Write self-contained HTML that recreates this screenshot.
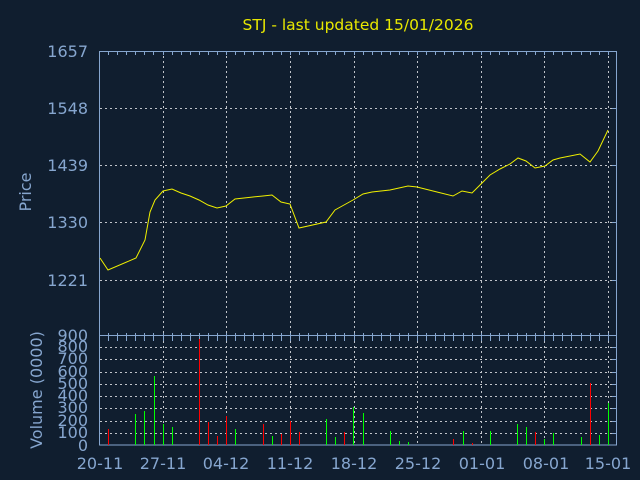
<!DOCTYPE html>
<html><head><meta charset="utf-8"><style>
html,body{margin:0;padding:0;background:#101e2f;}
svg{display:block}
text{font-family:"DejaVu Sans","Liberation Sans",sans-serif;}
</style></head><body>
<svg width="640" height="480" viewBox="0 0 640 480" xmlns="http://www.w3.org/2000/svg">
<rect width="640" height="480" fill="#101e2f"/>
<text x="358" y="30" font-size="15.5" fill="#e8e800" text-anchor="middle">STJ - last updated 15/01/2026</text>
<g stroke="#c0c4ca" stroke-width="1" stroke-dasharray="2,3" fill="none">
<path d="M100 108.5H617M100 165.5H617M100 222.5H617M100 280.5H617"/>
<path d="M100 433.5H617M100 421.5H617M100 408.5H617M100 396.5H617M100 384.5H617M100 372.5H617M100 359.5H617M100 347.5H617"/>
<path d="M163.5 51V445M226.5 51V445M290.5 51V445M354.5 51V445M417.5 51V445M481.5 51V445M544.5 51V445M608.5 51V445"/>
</g>
<g stroke="#86a6cf" stroke-width="1" fill="none">
<rect x="99.5" y="51.5" width="517" height="393.5"/>
<path d="M99 335.5H617"/>
<path id="tk" d="M108.5 51v4M117.5 51v4M126.5 51v4M135.5 51v4M144.5 51v4M153.5 51v4M163.5 51v4M172.5 51v4M181.5 51v4M190.5 51v4M199.5 51v4M208.5 51v4M217.5 51v4M226.5 51v4M235.5 51v4M244.5 51v4M253.5 51v4M263.5 51v4M272.5 51v4M281.5 51v4M290.5 51v4M299.5 51v4M308.5 51v4M317.5 51v4M326.5 51v4M335.5 51v4M344.5 51v4M354.5 51v4M363.5 51v4M372.5 51v4M381.5 51v4M390.5 51v4M399.5 51v4M408.5 51v4M417.5 51v4M426.5 51v4M435.5 51v4M444.5 51v4M453.5 51v4M463.5 51v4M472.5 51v4M481.5 51v4M490.5 51v4M499.5 51v4M508.5 51v4M517.5 51v4M526.5 51v4M535.5 51v4M544.5 51v4M553.5 51v4M562.5 51v4M571.5 51v4M581.5 51v4M590.5 51v4M599.5 51v4M608.5 51v4"/>
<use href="#tk" transform="translate(0,282)"/>
<use href="#tk" transform="translate(0,286)"/>
<path d="M612 108.5h5M612 165.5h5M612 222.5h5M612 280.5h5M612 433.5h5M612 421.5h5M612 408.5h5M612 396.5h5M612 384.5h5M612 372.5h5M612 359.5h5M612 347.5h5"/>
</g>
<g font-size="16" fill="#86a6cf" text-anchor="end">
<text x="88" y="57">1657</text><text x="88" y="114">1548</text><text x="88" y="171">1439</text><text x="88" y="228">1330</text><text x="88" y="286">1221</text><text x="88" y="341">900</text>
<text x="88" y="352">800</text><text x="88" y="364">700</text><text x="88" y="377">600</text><text x="88" y="389">500</text><text x="88" y="401">400</text><text x="88" y="413">300</text><text x="88" y="426">200</text><text x="88" y="438">100</text><text x="88" y="451">0</text>
</g>
<g font-size="16" fill="#86a6cf" text-anchor="middle">
<text x="100" y="469">20-11</text><text x="163" y="469">27-11</text><text x="226" y="469">04-12</text><text x="290" y="469">11-12</text><text x="354" y="469">18-12</text><text x="418" y="469">25-12</text><text x="482" y="469">01-01</text><text x="546" y="469">08-01</text><text x="608" y="469">15-01</text>
</g>
<text transform="translate(31,192) rotate(-90)" font-size="16" fill="#86a6cf" text-anchor="middle">Price</text>
<text transform="translate(42,390) rotate(-90)" font-size="16" fill="#86a6cf" text-anchor="middle">Volume (0000)</text>
<polyline fill="none" stroke="#f0f000" stroke-width="1" points="100,258 108,270 136,258 145,240 150,212 155,200 163,191 172,189 181,193 190,196 199,200 208,205 217,208 226,206 235,199 244,198 253,197 263,196 272,195 281,202 290,204 299,228 326,222 335,210 344,205 353,200 363,194 372,192 390,190 399,188 408,186 417,187 453,196 462,191 472,193 480,185 490,175 500,169 510,164 518,158 526,161 535,168 545,166 553,160 560,158 580,154 590,162 598,151 608,130"/>
<g stroke-width="1" transform="translate(0.5,0)">
<g stroke="#ff0000">
<path d="M108 445V429M199 445V339M208 445V422M217 445V436M226 445V416M263 445V424M281 445V434M290 445V421M299 445V432M344 445V432M453 445V439M472 445V443M535 445V432M590 445V383"/>
</g>
<g stroke="#00ff00">
<path d="M135 445V414M144 445V411M154 445V376M163 445V424M172 445V427M235 445V429M272 445V436M326 445V419M335 445V437M353 445V407M363 445V413M390 445V431M399 445V441M408 445V442M463 445V431M490 445V431M517 445V424M526 445V427M544 445V439M553 445V433M581 445V437M599 445V435M608 445V403"/>
</g>
</g>
</svg>
</body></html>
